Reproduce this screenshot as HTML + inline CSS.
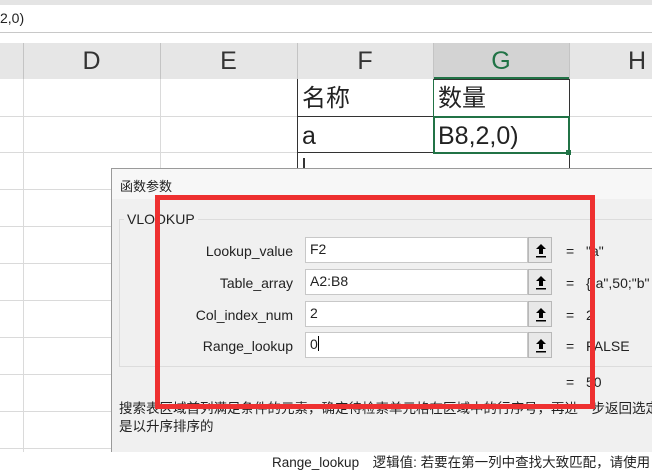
<!DOCTYPE html>
<html><head><meta charset="utf-8"><style>
*{margin:0;padding:0;box-sizing:border-box}
body{width:652px;height:452px;overflow:hidden;background:#fff;position:relative;font-family:"Liberation Sans","Noto Sans CJK SC",sans-serif;color:#222}
.a{position:absolute}
.hl{position:absolute;height:1px;background:#dadada}
.vl{position:absolute;width:1px;background:#dadada}
.col{position:absolute;top:43px;height:36px;font-size:25px;text-align:center;line-height:36px;color:#333}
.lbl{position:absolute;right:359px;font-size:14px;color:#222;width:180px;text-align:right}
.inp{position:absolute;left:305px;width:223px;height:26px;background:#fff;border:1px solid #c8c8c8;font-size:14px;padding:3px 0 0 4px}
.btn{position:absolute;left:528px;width:24px;height:26px;background:#e8e8e8;border:1px solid #b8b8b8}
.btn svg{position:absolute;left:6px;top:5px}
.eq{position:absolute;left:566px;font-size:14px}
.val{position:absolute;left:586px;font-size:14px;white-space:nowrap}
</style></head><body>
<div class="a" style="left:0;top:0;width:652px;height:5px;background:#e4e4e4"></div>
<div class="a" style="left:0;top:10px;font-size:14px;color:#222">2,0)</div>
<div class="a" style="left:0;top:32px;width:652px;height:1px;background:#c8c8c8"></div>
<div class="a" style="left:0;top:43px;width:652px;height:36px;background:#e6e6e6"></div>
<div class="a" style="left:433px;top:43px;width:136px;height:36px;background:#d3d3d3"></div>
<div class="a" style="left:433px;top:77px;width:136px;height:2px;background:#217346"></div>
<div class="vl" style="left:23px;top:43px;height:36px;background:#c4c4c4"></div>
<div class="vl" style="left:160px;top:43px;height:36px;background:#c4c4c4"></div>
<div class="vl" style="left:297px;top:43px;height:36px;background:#c4c4c4"></div>
<div class="vl" style="left:433px;top:43px;height:36px;background:#c4c4c4"></div>
<div class="vl" style="left:569px;top:43px;height:36px;background:#c4c4c4"></div>
<div class="col" style="left:23px;width:137px">D</div>
<div class="col" style="left:160px;width:137px">E</div>
<div class="col" style="left:297px;width:136px">F</div>
<div class="col" style="left:433px;width:136px;color:#217346">G</div>
<div class="col" style="left:569px;width:136px">H</div>
<!-- grid -->
<div class="vl" style="left:23px;top:79px;height:373px"></div>
<div class="vl" style="left:160px;top:79px;height:90px"></div>
<div class="hl" style="left:0;top:116px;width:652px"></div>
<div class="hl" style="left:0;top:152px;width:652px"></div>
<div class="hl" style="left:0;top:189px;width:111px"></div>
<div class="hl" style="left:0;top:226px;width:111px"></div>
<div class="hl" style="left:0;top:263px;width:111px"></div>
<div class="hl" style="left:0;top:300px;width:111px"></div>
<div class="hl" style="left:0;top:337px;width:111px"></div>
<div class="hl" style="left:0;top:374px;width:111px"></div>
<div class="hl" style="left:0;top:411px;width:111px"></div>
<div class="hl" style="left:0;top:448px;width:111px"></div>
<!-- table borders -->
<div class="a" style="left:297px;top:79px;width:1px;height:90px;background:#333"></div>
<div class="a" style="left:297px;top:116px;width:136px;height:1px;background:#333"></div>
<div class="a" style="left:297px;top:152px;width:136px;height:1px;background:#333"></div>
<div class="a" style="left:569px;top:79px;width:1px;height:90px;background:#333"></div>
<div class="a" style="left:433px;top:79px;width:137px;height:38px;border:1px solid #333;border-color:#333 #333 #217346 #217346"></div>
<div class="a" style="left:433px;top:116px;width:137px;height:38px;border:2px solid #217346"></div>
<div class="a" style="left:566px;top:150px;width:5px;height:5px;background:#217346"></div>
<div class="a" style="left:302px;top:83px;font-size:24px;line-height:32px">名称</div>
<div class="a" style="left:438px;top:83px;font-size:24px;line-height:32px">数量</div>
<div class="a" style="left:302px;top:120px;font-size:25px;line-height:32px">a</div>
<div class="a" style="left:438px;top:120px;font-size:25px;line-height:32px">B8,2,0)</div>
<div class="a" style="left:303px;top:158px;width:2px;height:10px;background:#333"></div>
<!-- dialog -->
<div class="a" style="left:111px;top:168px;width:541px;height:284px;background:#f0f0f0;border-left:1px solid #9a9a9a;border-top:1px solid #9a9a9a"></div>
<div class="a" style="left:112px;top:169px;width:540px;height:30px;background:#f7f7f7"></div>
<div class="a" style="left:120px;top:176px;font-size:13px">函数参数</div>
<div class="a" style="left:119px;top:219px;width:540px;height:148px;border:1px solid #dcdcdc"></div>
<div class="a" style="left:124px;top:211px;font-size:14px;background:#f0f0f0;padding:0 3px">VLOOKUP</div>
<div class="lbl" style="top:243px">Lookup_value</div>
<div class="lbl" style="top:275px">Table_array</div>
<div class="lbl" style="top:307px">Col_index_num</div>
<div class="lbl" style="top:338px">Range_lookup</div>
<div class="inp" style="top:237px">F2</div>
<div class="inp" style="top:269px">A2:B8</div>
<div class="inp" style="top:301px">2</div>
<div class="inp" style="top:332px">0<span style="display:inline-block;width:1px;height:15px;background:#000;vertical-align:-2px"></span></div>
<div class="btn" style="top:237px"><svg width="12" height="15" viewBox="0 0 12 15"><path d="M6 1L1 6h3v5h4V6h3z" fill="#000"/><rect x="1" y="13" width="10" height="1.5" fill="#000"/></svg></div>
<div class="btn" style="top:269px"><svg width="12" height="15" viewBox="0 0 12 15"><path d="M6 1L1 6h3v5h4V6h3z" fill="#000"/><rect x="1" y="13" width="10" height="1.5" fill="#000"/></svg></div>
<div class="btn" style="top:301px"><svg width="12" height="15" viewBox="0 0 12 15"><path d="M6 1L1 6h3v5h4V6h3z" fill="#000"/><rect x="1" y="13" width="10" height="1.5" fill="#000"/></svg></div>
<div class="btn" style="top:332px"><svg width="12" height="15" viewBox="0 0 12 15"><path d="M6 1L1 6h3v5h4V6h3z" fill="#000"/><rect x="1" y="13" width="10" height="1.5" fill="#000"/></svg></div>
<div class="eq" style="top:243px">=</div><div class="val" style="top:243px">"a"</div>
<div class="eq" style="top:275px">=</div><div class="val" style="top:275px">{"a",50;"b"</div>
<div class="eq" style="top:307px">=</div><div class="val" style="top:307px">2</div>
<div class="eq" style="top:338px">=</div><div class="val" style="top:338px">FALSE</div>
<div class="eq" style="top:374px">=</div><div class="val" style="top:374px">50</div>
<div class="a" style="left:119px;top:397px;font-size:13.5px;white-space:nowrap">搜索表区域首列满足条件的元素，确定待检索单元格在区域中的行序号，再进一步返回选定</div>
<div class="a" style="left:119px;top:415px;font-size:13.5px;white-space:nowrap">是以升序排序的</div>
<div class="a" style="left:272px;top:451px;font-size:13.5px;white-space:nowrap">Range_lookup　逻辑值: 若要在第一列中查找大致匹配，请使用</div>
<!-- red box -->
<div class="a" style="left:155px;top:195px;width:440px;height:214px;border:5px solid #ee3030"></div>
</body></html>
